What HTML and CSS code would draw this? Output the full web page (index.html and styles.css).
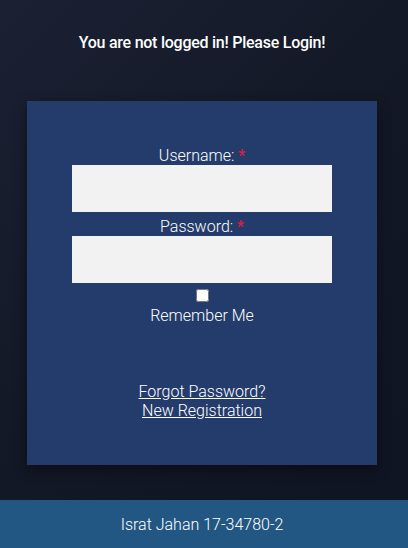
FILE: index.html
```html
<!DOCTYPE html>
<html>
<head>
<meta charset="utf-8">
<link rel="stylesheet" href="styles.css">
</head>
<body>
<main class="page">
  <h1 class="notice">You are not logged in! Please Login!</h1>
  <form class="card">
    <label class="label">Username: <span class="req">*</span></label>
    <input class="field" type="text">
    <label class="label label-gap">Password: <span class="req">*</span></label>
    <input class="field" type="password">
    <input class="check" type="checkbox">
    <div class="label">Remember Me</div>
    <div class="links">
      <a href="#" class="link">Forgot Password?</a>
      <a href="#" class="link">New Registration</a>
    </div>
  </form>
</main>
<footer class="footer">Israt Jahan 17-34780-2</footer>
</body>
</html>
```
FILE: styles.css
```css
html, body {
  margin: 0;
  padding: 0;
}
body {
  font-family: Roboto, "Liberation Sans", sans-serif;
  background: linear-gradient(135deg, #1b2133 0%, #131826 50%, #0f1422 100%);
  color: #fff;
  min-height: 548px;
  display: flex;
  flex-direction: column;
}
.page {
  flex: 1;
  display: flex;
  flex-direction: column;
  align-items: center;
  padding-top: 33px;
  padding-right: 4px;
}
.notice {
  margin: 0;
  font-size: 16px;
  line-height: 19px;
  font-weight: 500;
  letter-spacing: -0.25px;
}
.card {
  margin-top: 49px;
  width: 350px;
  box-sizing: border-box;
  padding: 45px 45px 45px;
  background: #243c6b;
  box-shadow: 0 4px 12px rgba(0, 0, 0, 0.45);
  display: flex;
  flex-direction: column;
  align-items: center;
}
.label {
  font-size: 16px;
  line-height: 19px;
  font-weight: 300;
}
.label-gap {
  margin-top: 5px;
}
.req {
  color: #e8193f;
  font-weight: 400;
}
.field {
  width: 260px;
  height: 47px;
  box-sizing: border-box;
  border: none;
  background: #f2f2f2;
  margin: 0;
}
.check {
  width: 13px;
  height: 13px;
  margin: 6px 0 4px;
}
.links {
  margin-top: 57px;
  display: flex;
  flex-direction: column;
  align-items: center;
}
.link {
  color: #fff;
  font-size: 16px;
  line-height: 19px;
  font-weight: 300;
  text-decoration: underline;
}
.footer {
  margin-top: 35px;
  height: 48px;
  padding-right: 4px;
  background: #225784;
  display: flex;
  align-items: center;
  justify-content: center;
  font-size: 16px;
  font-weight: 300;
}
```
